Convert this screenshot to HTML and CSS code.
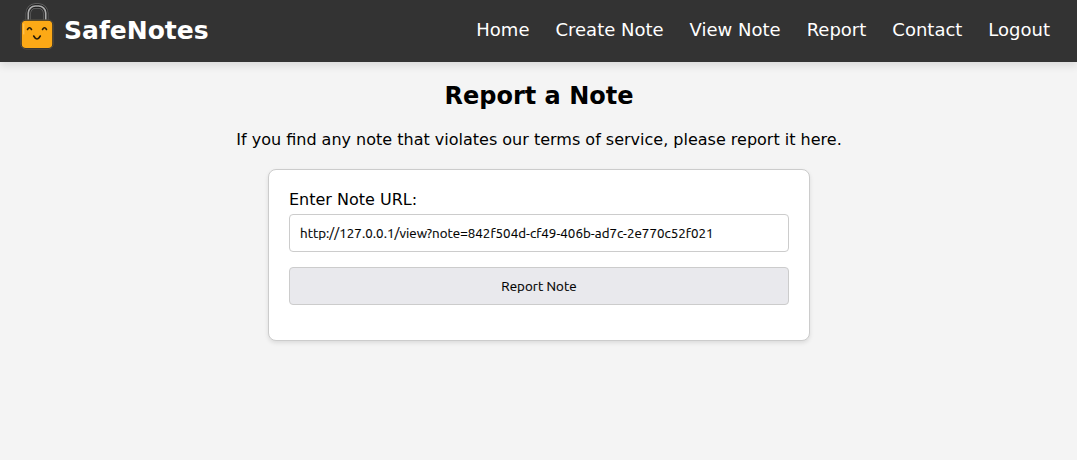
FILE: index.html
```html
<!DOCTYPE html>
<html lang="en">
<head>
<meta charset="utf-8">
<title>SafeNotes</title>
<link rel="stylesheet" href="styles.css">
</head>
<body>
<header class="navbar">
  <a class="brand">
    <svg class="logo" viewBox="0 0 34 46" aria-hidden="true">
      <g fill="none">
        <path d="M8.300 18V9a7 7 0 0 1 7-7h3.400a7 7 0 0 1 7 7V18" stroke="#6a6a6a" stroke-width="5.400"/>
        <path d="M8.300 18V9a7 7 0 0 1 7-7h3.400a7 7 0 0 1 7 7V18" stroke="#222" stroke-width="4"/>
        <path d="M8.300 18V9a7 7 0 0 1 7-7h3.400a7 7 0 0 1 7 7V18" stroke="#acacac" stroke-width="1.700"/>
      </g>
      <rect x=".8" y="15.800" width="32.400" height="29.200" rx="5" fill="#222" stroke="#625b50" stroke-width=".7"/>
      <rect x="1.800" y="16.800" width="30.400" height="27.200" rx="4" fill="#fca916"/>
      <path d="M3.800 20v10" stroke="#ffd078" stroke-width=".8" stroke-linecap="round"/>
      <path d="M7.500 25.500q2-3.500 4 0M22.500 25.500q2-3.500 4 0M13.700 32q3.300 6 6.600 0" fill="none" stroke="#271b08" stroke-width="1.600" stroke-linecap="round"/>
    </svg>
    <span class="name">SafeNotes</span>
  </a>
  <nav class="links"><a>Home</a><a>Create Note</a><a>View Note</a><a>Report</a><a>Contact</a><a>Logout</a></nav>
</header>
<main class="content">
  <h1 class="title">Report a Note</h1>
  <p class="intro">If you find any note that violates our terms of service, please report it here.</p>
  <form class="card">
    <label class="label" for="url">Enter Note URL:</label>
    <input class="field" id="url" type="text" value="http://127.0.0.1/view?note=842f504d-cf49-406b-ad7c-2e770c52f021">
    <button class="submit" type="button">Report Note</button>
  </form>
</main>
</body>
</html>
```
FILE: styles.css
```css
* { box-sizing: border-box; }
body { margin: 0; min-height: 100vh; background: #f4f4f4; color: #000; font: 16px "DejaVu Sans", sans-serif; }
.navbar { height: 62px; padding: 0 27px 0 20px; display: flex; align-items: center; justify-content: space-between; background: #333; color: #fff; box-shadow: 0 4px 8px rgba(0,0,0,.1); }
.brand { display: flex; align-items: center; gap: 10px; font-size: 25px; font-weight: 700; }
.logo { width: 34px; height: 46px; margin-bottom: 8px; overflow: visible; }
.name { padding-bottom: 2px; }
.links { display: flex; gap: 26px; font-size: 18px; padding-bottom: 3px; }
.content { display: flex; flex-direction: column; align-items: center; padding: 20px 0 0 1px; }
.title { margin: 0; font-size: 24px; line-height: 28px; }
.intro { margin: 20px 0; line-height: 19px; }
.card { width: 542px; height: 172px; padding: 20px; background: #fff; border: 1px solid #ccc; border-radius: 8px; box-shadow: 0 2px 4px rgba(0,0,0,.1); }
.label { display: block; line-height: 19px; margin-bottom: 5px; }
.field, .submit { display: block; width: 100%; height: 38px; padding: 10px; border: 1px solid #ccc; border-radius: 4px; font: 13.333px Ubuntu, "Noto Sans", sans-serif; letter-spacing: .04px; color: #000; -webkit-text-stroke: .15px #000; }
.submit { letter-spacing: .09px; background: #e9e9ed; }
.field { background: #fff; margin-bottom: 15px; }
```
